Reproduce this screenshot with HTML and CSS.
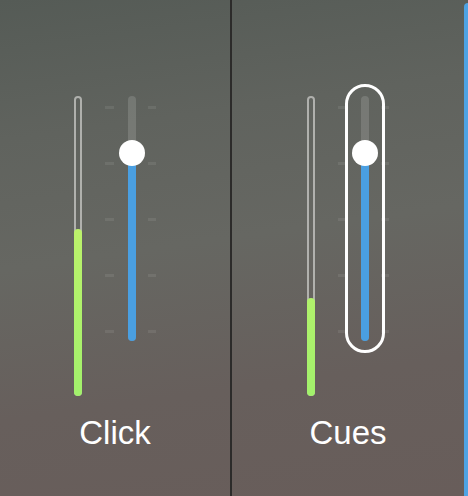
FILE: index.html
```html
<!DOCTYPE html>
<html>
<head>
<meta charset="utf-8">
<link rel="stylesheet" href="styles.css">
</head>
<body>
<div class="app">
  <section class="col col-left">
    <div class="controls">
      <div class="meter"><div class="meter-fill" style="height:167px"></div></div>
      <div class="fader">
        <div class="ticks"><i></i><i></i><i></i><i></i><i></i></div>
        <div class="track">
          <div class="track-fill" style="height:188px"></div>
          <div class="knob" style="top:44px"></div>
        </div>
        <div class="ticks"><i></i><i></i><i></i><i></i><i></i></div>
      </div>
    </div>
    <div class="label">Click</div>
  </section>
  <div class="divider"></div>
  <section class="col col-right">
    <div class="controls">
      <div class="meter"><div class="meter-fill" style="height:98px"></div></div>
      <div class="fader">
        <div class="ticks"><i></i><i></i><i></i><i></i><i></i></div>
        <div class="track focused">
          <div class="track-fill" style="height:188px"></div>
          <div class="knob" style="top:44px"></div>
        </div>
        <div class="ticks"><i></i><i></i><i></i><i></i><i></i></div>
      </div>
    </div>
    <div class="label">Cues</div>
  </section>
  <div class="edge"></div>
</div>
</body>
</html>
```

FILE: styles.css
```css
html, body {
  margin: 0;
  padding: 0;
}
body {
  width: 468px;
  height: 496px;
  overflow: hidden;
  font-family: "Liberation Sans", Arial, sans-serif;
}
.app {
  display: flex;
  width: 468px;
  height: 496px;
  background: linear-gradient(172deg, #555b56 0%, #60635e 25%, #666762 48%, #675f5c 75%, #685d5a 100%);
}
.col {
  display: flex;
  flex-direction: column;
}
.col-left { width: 230px; }
.col-right { width: 232px; }
.col-left .controls { padding-left: 74px; }
.col-right .controls { padding-left: 75px; }
.controls {
  display: flex;
  align-items: flex-start;
  padding-top: 96px;
}
.meter {
  box-sizing: border-box;
  width: 8px;
  height: 300px;
  border: 2px solid rgba(210, 210, 207, 0.7);
  border-radius: 4px;
  display: flex;
  flex-direction: column;
  justify-content: flex-end;
}
.meter-fill {
  margin: 0 -2px -2px;
  border-radius: 4px;
  background: linear-gradient(to top, #a2f16c 0px, #b9f26b 150px, #daf56a 300px);
  background-size: 100% 300px;
  background-position: bottom;
}
.fader {
  display: flex;
  margin-left: 23px;
}
.ticks {
  display: flex;
  flex-direction: column;
  gap: 53px;
  padding-top: 10px;
}
.ticks i {
  display: block;
  width: 9px;
  height: 3px;
  background: rgba(255, 255, 255, 0.08);
}
.ticks:last-child i { width: 8px; }
.track {
  position: relative;
  width: 8px;
  height: 245px;
  margin: 0 12px 0 14px;
  border-radius: 4px;
  background: rgba(255, 255, 255, 0.14);
  display: flex;
  flex-direction: column;
  justify-content: flex-end;
}
.track-fill {
  border-radius: 4px;
  background: #4a9fe1;
}
.knob {
  position: absolute;
  left: -9px;
  width: 26px;
  height: 26px;
  border-radius: 50%;
  background: #ffffff;
}
.track.focused::after {
  content: "";
  position: absolute;
  top: -12px;
  bottom: -12px;
  left: -16px;
  right: -16px;
  border: 3px solid #ffffff;
  border-radius: 20px;
}
.label {
  margin-top: 21px;
  text-align: center;
  color: #ffffff;
  font-size: 33px;
  line-height: 32px;
}
.divider {
  width: 2px;
  background: #2c2b2a;
}
.edge {
  width: 4px;
  margin-top: 3px;
  border-top-left-radius: 4px;
  background: #4ea3e4;
}
```
